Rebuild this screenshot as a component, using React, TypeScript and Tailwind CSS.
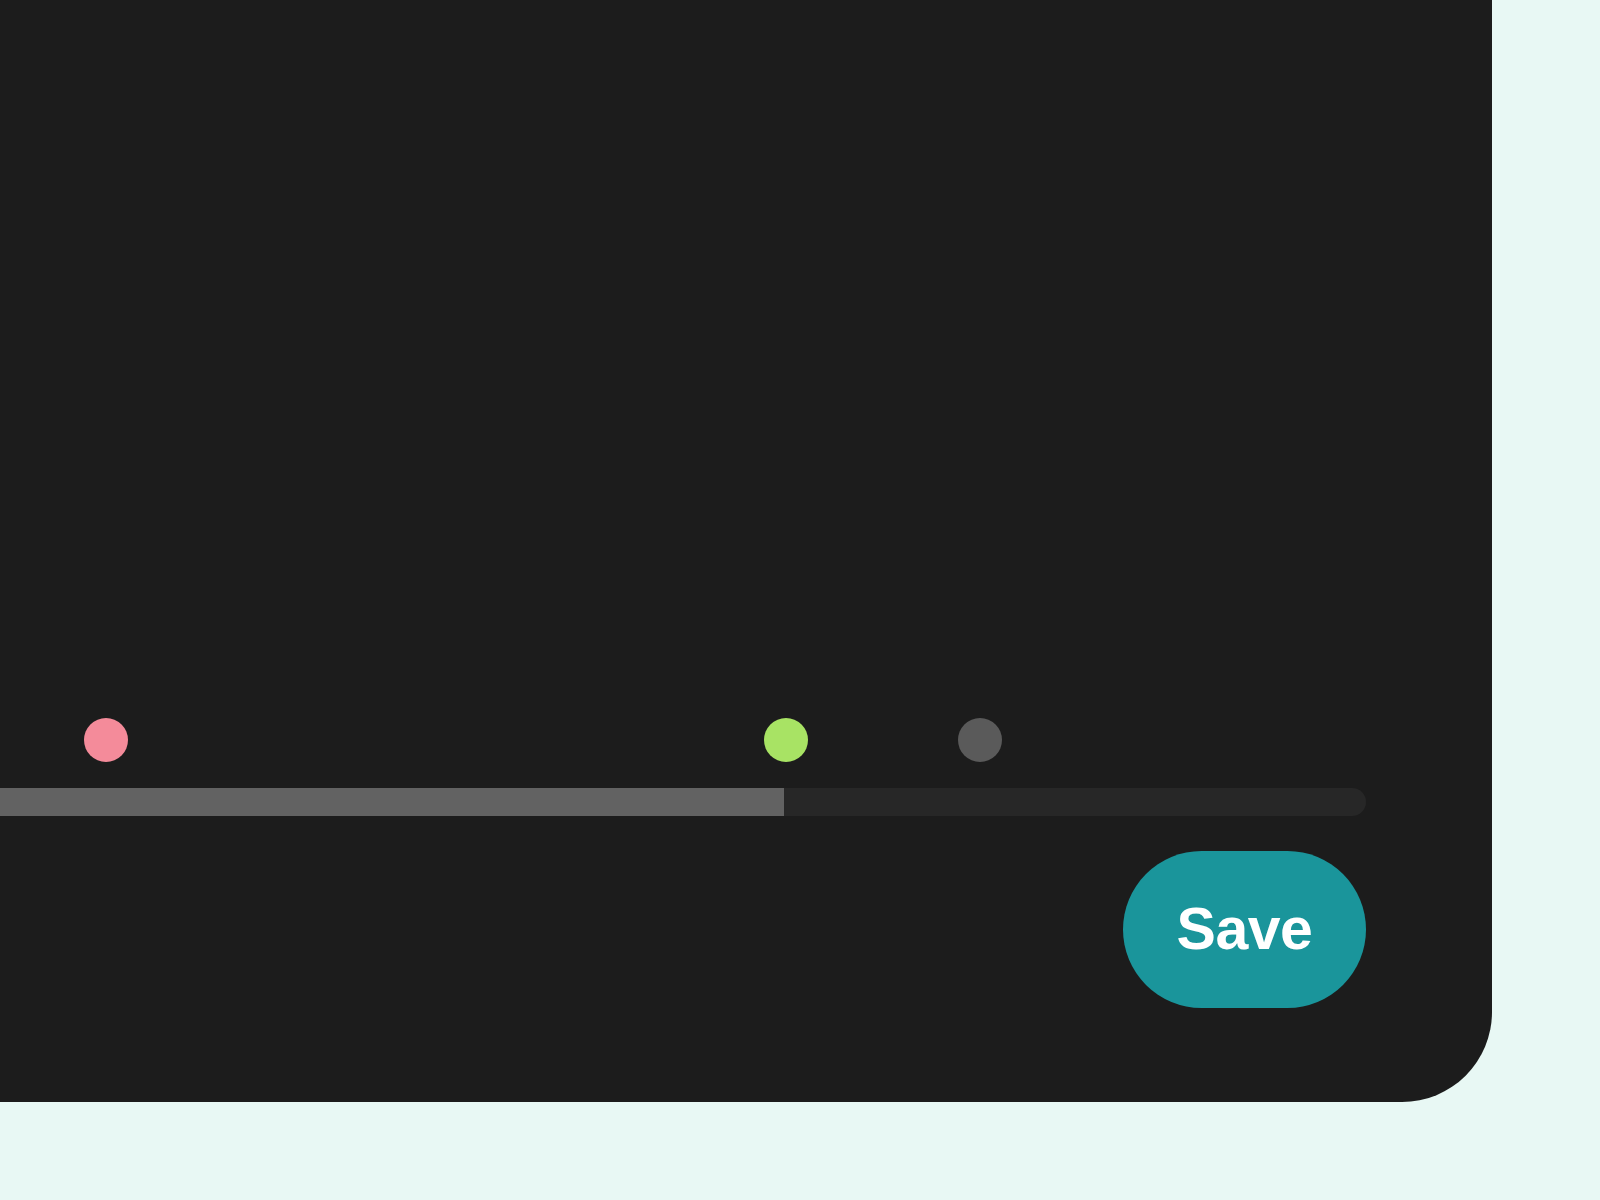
export default function App() {
  // timeline markers, positions in px from the left edge of the track
  const markers = [
    { left: 84, color: 'bg-[#f48b9a]' },
    { left: 764, color: 'bg-[#a8e364]' },
    { left: 958, color: 'bg-[#5a5a5a]' },
  ];

  return (
    <div className="w-[1600px] h-[1200px] bg-[#e8f8f4] font-['Liberation_Sans',Arial,sans-serif]">
      <div className="w-[1492px] h-[1102px] bg-[#1c1c1c] rounded-br-[90px] flex flex-col justify-end pr-[126px] pb-[94px]">
        <div className="relative h-[44px]">
          {markers.map((m) => (
            <span
              key={m.left}
              className={`absolute top-0 w-[44px] h-[44px] rounded-full ${m.color}`}
              style={{ left: m.left }}
            />
          ))}
        </div>

        <div className="mt-[26px] h-[28px] bg-[#272727] rounded-r-full overflow-hidden">
          <div className="h-full w-[784px] bg-[#626262]" />
        </div>

        <div className="mt-[35px] flex justify-end">
          <button className="h-[157px] w-[243px] rounded-full bg-[#1a959b] text-white text-[59px] font-bold tracking-[-0.5px] leading-none flex items-center justify-center">
            Save
          </button>
        </div>
      </div>
    </div>
  );
}
